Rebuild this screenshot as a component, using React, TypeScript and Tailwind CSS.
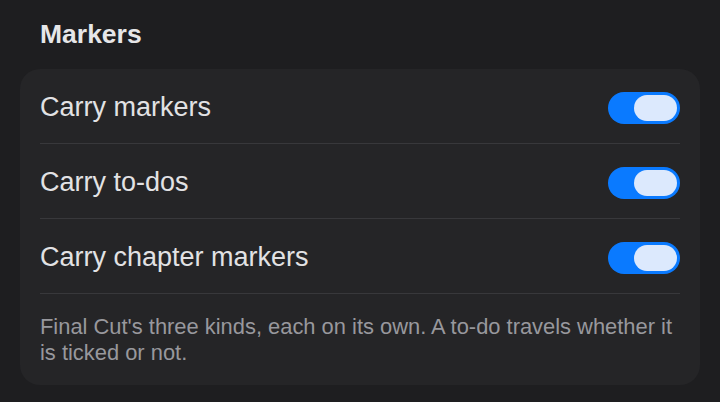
import { useState } from 'react';

type Row = { id: string; label: string };

const rows: Row[] = [
  { id: 'markers', label: 'Carry markers' },
  { id: 'todos', label: 'Carry to-dos' },
  { id: 'chapters', label: 'Carry chapter markers' },
];

function Toggle({ on, onChange }: { on: boolean; onChange: () => void }) {
  return (
    <button
      type="button"
      onClick={onChange}
      aria-pressed={on}
      className={
        'flex h-[32px] w-[72px] shrink-0 items-center rounded-full p-[3px] ' +
        (on ? 'justify-end bg-[#0a7aff]' : 'justify-start bg-[#3a3a3d]')
      }
    >
      <span className="block h-[26px] w-[43px] rounded-full bg-[#dce9fd]" />
    </button>
  );
}

export default function App() {
  const [state, setState] = useState<Record<string, boolean>>({
    markers: true,
    todos: true,
    chapters: true,
  });

  return (
    <div
      className="min-h-[402px] w-full bg-[#1e1e20] px-5 pt-[18px] pb-4"
      style={{ fontFamily: '"Liberation Sans", Arial, sans-serif' }}
    >
      {/* section title */}
      <h2 className="mb-[19px] px-5 text-[26.5px] font-bold leading-[32px] text-[#e6e6e8]">
        Markers
      </h2>

      <div className="rounded-[20px] bg-[#252527] px-5">
        {rows.map((row) => (
          <div
            key={row.id}
            className="flex h-[75px] items-center justify-between border-b border-[#38383b] pt-[3px]"
          >
            <span className="text-[27px] text-[#e2e2e4]">{row.label}</span>
            <Toggle
              on={state[row.id]}
              onChange={() => setState((s) => ({ ...s, [row.id]: !s[row.id] }))}
            />
          </div>
        ))}

        <p className="pt-5 pb-[19px] text-[21.9px] leading-[26px] text-[#98989d]">
          Final Cut's three kinds, each on its own. A to-do travels whether it is ticked or
          not.
        </p>
      </div>
    </div>
  );
}
